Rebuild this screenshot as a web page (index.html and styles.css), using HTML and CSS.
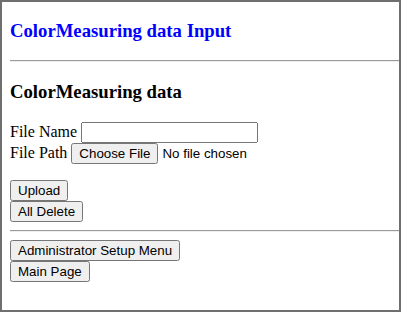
FILE: index.html
```html
<!DOCTYPE html>
<html class="frame">
<head>
<meta charset="utf-8">
<title>ColorMeasuring data Input</title>
<link rel="stylesheet" href="styles.css">
</head>
<body class="page">
<h3 class="title">ColorMeasuring data Input</h3>
<hr class="rule">
<h3 class="section">ColorMeasuring data</h3>
<form class="form">
<div class="line">File Name <input class="text" type="text"></div>
<div class="line">File Path <input class="file" type="file"></div>
<div class="spacer"></div>
<div class="line"><input class="btn" type="button" value="Upload"></div>
<div class="line"><input class="btn" type="button" value="All Delete"></div>
</form>
<hr class="rule">
<div class="line"><input class="btn" type="button" value="Administrator Setup Menu"></div>
<div class="line"><input class="btn" type="button" value="Main Page"></div>
</body>
</html>
```
FILE: styles.css
```css
.frame {
  border: 2px solid #6f6f6f;
  min-height: 100%;
  box-sizing: border-box;
  background: #fff;
}
.page {
  margin: 0 0 8px 8px;
  font-family: "Liberation Serif", "Times New Roman", serif;
  font-size: 16px;
  color: #000;
}
.title, .section {
  font-size: 18.72px;
  font-weight: bold;
  margin: 18.72px 0;
}
.title {
  color: #0000ff;
  margin-top: 17.72px;
}
.rule {
  margin: 8px 0;
  border: 0;
  border-top: 1px solid #9a9a9a;
  border-bottom: 1px solid #eeeeee;
  height: 0;
}
.form {
  margin: 0;
}
.line {
  height: 21px;
  display: flex;
  align-items: center;
  white-space: pre;
}
.spacer {
  height: 16px;
}
.text, .file, .btn {
  font-family: "Liberation Sans", Arial, sans-serif;
  font-size: 13.333px;
  margin: 0;
}
.text {
  box-sizing: border-box;
  width: 177px;
  height: 21px;
}
.btn {
  box-sizing: border-box;
  height: 21px;
}
```
